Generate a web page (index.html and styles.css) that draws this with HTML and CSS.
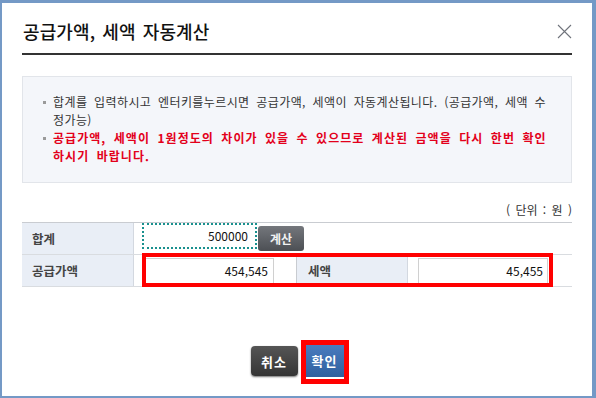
FILE: index.html
```html
<!DOCTYPE html>
<html lang="ko">
<head>
<meta charset="utf-8">
<title>공급가액, 세액 자동계산</title>
<link rel="stylesheet" href="styles.css">
</head>
<body>
<div class="dialog">
  <div class="header">
    <h1 class="title">공급가액, 세액 자동계산</h1>
    <span class="close"><svg width="15" height="15" viewBox="0 0 15 15"><path d="M1 1 L14 14 M14 1 L1 14" stroke="#6f737b" stroke-width="1.1" fill="none"/></svg></span>
  </div>
  <div class="notice">
    <ul>
      <li>합계를 입력하시고 엔터키를누르시면 공급가액, 세액이 자동계산됩니다. (공급가액, 세액 수정가능)</li>
      <li class="warn">공급가액, 세액이 1원정도의 차이가 있을 수 있으므로 계산된 금액을 다시 한번 확인 하시기 바랍니다.</li>
    </ul>
  </div>
  <p class="unit">( 단위 : 원 )</p>
  <div class="table-wrap">
    <div class="row">
      <div class="label">합계</div>
      <div class="cell cell-wide">
        <div class="input focus">500000</div>
        <button class="btn-calc">계산</button>
      </div>
    </div>
    <div class="row">
      <div class="label">공급가액</div>
      <div class="cell cell-mid"><div class="input">454,545</div></div>
      <div class="label label-mid">세액</div>
      <div class="cell cell-last"><div class="input input-last">45,455</div></div>
    </div>
    <div class="highlight hl-row"></div>
  </div>
  <div class="actions">
    <button class="btn btn-cancel">취소</button>
    <button class="btn btn-ok">확인<span class="highlight hl-btn"></span></button>
  </div>
</div>
</body>
</html>
```
FILE: styles.css
```css
* { box-sizing: border-box; }
html, body { margin: 0; }
body {
  background: #7499c6;
  padding: 3px 4px 2px 2px;
  width: 596px;
  height: 398px;
  overflow: hidden;
  font-family: "Noto Sans CJK KR", "Noto Sans", sans-serif;
  color: #333;
}
.dialog {
  height: 393px;
  background: #fff;
  padding: 0 20px;
}
.header {
  display: flex;
  justify-content: space-between;
  align-items: center;
  padding-top: 16px;
  padding-bottom: 10px;
  border-bottom: 2px solid #333;
}
.title {
  margin: 0;
  font-size: 18px;
  line-height: 24px;
  font-weight: 500;
  color: #111;
  padding-left: 1px;
  letter-spacing: 0.1px;
  word-spacing: 2px;
}
.close { display: flex; }
.notice {
  margin-top: 21px;
  border: 1px solid #e2e5ea;
  background: #f4f6fa;
  padding: 16px 18px 17px 20px;
}
.notice ul { margin: 0; padding: 0; list-style: none; }
.notice li {
  position: relative;
  padding-left: 10px;
  font-size: 12px;
  line-height: 18px;
  color: #333;
  letter-spacing: 0.4px;
  word-spacing: 3px;
}
.notice li::before {
  content: "";
  position: absolute;
  left: 0;
  top: 8px;
  width: 3px;
  height: 3px;
  background: #9a9a9a;
}
.notice li.warn {
  color: #e3001b;
  font-weight: 700;
  letter-spacing: 1.05px;
  word-spacing: 3px;
}
.unit {
  margin: 18px 0 3px;
  text-align: right;
  font-size: 12px;
  line-height: 18px;
  color: #333;
  word-spacing: 2px;
}
.table-wrap {
  position: relative;
  border-top: 1px solid #c9ccd1;
}
.row {
  display: flex;
  height: 32px;
  border-bottom: 1px solid #d9dce0;
}
.label {
  width: 112px;
  flex: none;
  background: #e9eef6;
  border-right: 1px solid #d3d8e0;
  padding-left: 10px;
  display: flex;
  align-items: center;
  font-size: 12.5px;
  font-weight: 700;
  color: #444;
}
.cell { display: flex; align-items: center; }
.cell-wide { flex: 1; align-items: flex-start; padding-left: 8px; }
.cell-mid { width: 162px; padding-left: 8px; }
.label-mid { border-left: 1px solid #c9ccd1; padding-left: 11px; }
.cell-last { flex: 1; padding-left: 10px; }
.input {
  height: 26px;
  width: 132px;
  border: 1px solid #d0d0d0;
  background: #fff;
  text-align: right;
  padding-right: 5px;
  font-size: 12px;
  line-height: 24px;
  color: #111;
}
.input.focus {
  width: 115px;
  border: 2px dotted #19908e;
  padding-right: 7px;
  line-height: 22px;
}
.input-last { width: 130px; padding-right: 4px; }
.btn-calc {
  margin: 3px 0 0 1px;
  width: 46px;
  height: 25px;
  border: none;
  border-radius: 3px;
  background: linear-gradient(#74777c, #4c4f54);
  color: #f2f2f2;
  font-family: inherit;
  font-size: 12px;
  font-weight: 700;
  padding: 0;
}
.highlight {
  position: absolute;
  border: 4px solid #ff0000;
}
.hl-row { left: 120px; top: 30px; width: 411px; height: 34px; }
.actions {
  display: flex;
  justify-content: center;
  align-items: flex-start;
  gap: 8px;
  margin-top: 57px;
}
.btn {
  border: none;
  padding: 0;
  font-family: inherit;
  font-size: 13px;
  font-weight: 700;
  color: #fff;
  letter-spacing: 1px;
}
.btn-cancel {
  margin-top: 2px;
  width: 47px;
  height: 30px;
  border-radius: 4px;
  background: linear-gradient(#555, #353535);
  box-shadow: 0 1px 2px rgba(0,0,0,0.55);
}
.btn-ok {
  position: relative;
  width: 38px;
  height: 33px;
  background: linear-gradient(#4b7cbf, #2f609f);
}
.hl-btn {
  left: -5px;
  right: -5px;
  top: -4px;
  bottom: -7px;
  border-width: 5px;
}
```
